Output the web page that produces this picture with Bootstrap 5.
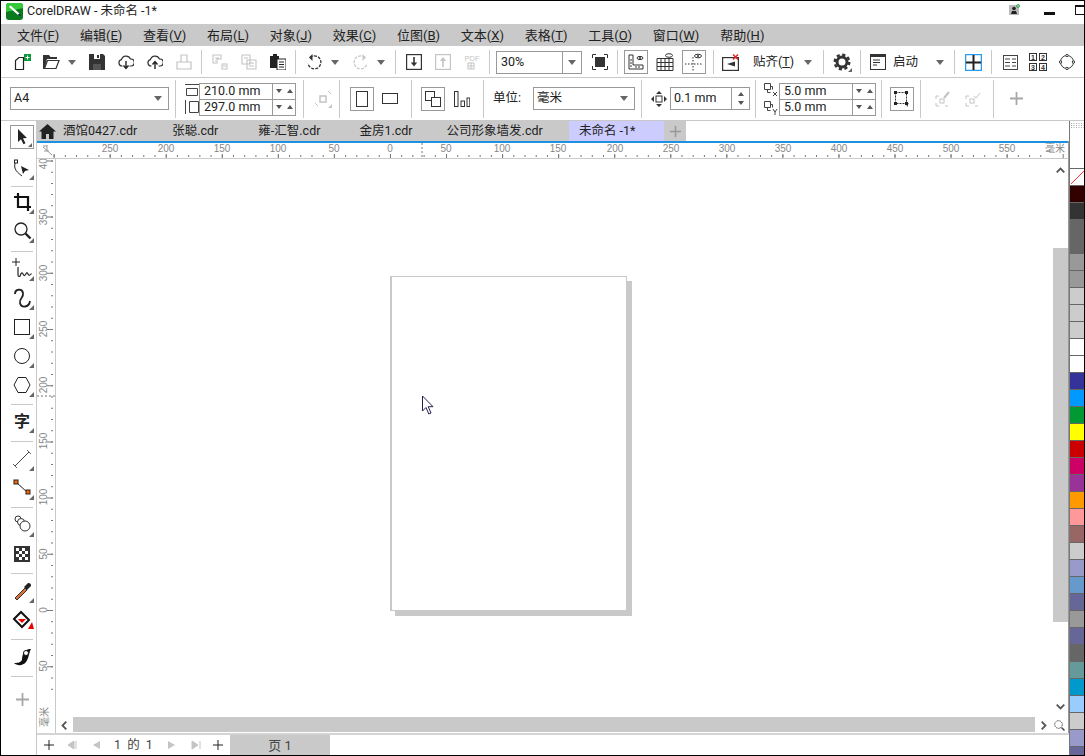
<!DOCTYPE html>
<html lang="zh">
<head>
<meta charset="utf-8">
<title>CorelDRAW</title>
<link href="https://cdn.jsdelivr.net/npm/bootstrap@5.3.0/dist/css/bootstrap.min.css" rel="stylesheet">
<style>
html,body{margin:0;height:756px;overflow:hidden;background:#fff}
body{font-family:Roboto,"Noto Sans CJK SC",sans-serif;font-size:12.5px;line-height:1;color:#222}
svg{display:block;flex:none}
.cw-win{width:1085px;height:756px;border:1px solid #000;overflow:hidden}
.cw-title{height:23px;flex:none;font-size:12.5px}
.cw-logo{margin:2px 4px 0 5px}
.cw-usr{margin:3px 24px 0 0}
.cw-winbtn-min{width:11px;height:3px;background:#111;margin:11px 20px 0 0}
.cw-winbtn-max{width:20px;height:10px;border:1px solid #111;border-top-width:2px;margin:4px -11px 0 0}
.cw-menu{height:22px;flex:none;background:#c9c9c9;padding-left:16px;font-size:13px}
.cw-menu span{margin-right:20.75px;white-space:nowrap}
.cw-tb1{height:32px;flex:none;padding-left:7px;padding-top:1px;border-bottom:1px solid #c9c9c9}
.cw-tb2{height:43px;flex:none;padding-left:9px;padding-bottom:1px;border-bottom:1px solid #c9c9c9}
.cw-t{width:29px;height:24px;flex:none}
.cw-tri{width:0;height:0;border-top:5px solid #666;border-left:4.5px solid transparent;border-right:4.5px solid transparent;flex:none}
.cw-tri-s{width:0;height:0;border-top:4px solid #555;border-left:3.5px solid transparent;border-right:3.5px solid transparent;flex:none}
.cw-tru-s{width:0;height:0;border-bottom:4px solid #555;border-left:3.5px solid transparent;border-right:3.5px solid transparent;flex:none}
.cw-arw{width:16px;padding-left:2px;flex:none}
.cw-sep{width:7px;height:24px;flex:none}
.cw-sep::after{content:"";display:block;width:1px;height:100%;background:#c9c9c9;margin-left:3px}
.cw-sep2{width:1px;height:38px;background:#c9c9c9;flex:none}
.cw-box{border:1px solid #999;background:#fff;flex:none}
.cw-ml1{margin-left:1px}.cw-ml2{margin-left:2px}.cw-ml3{margin-left:3px}.cw-ml4{margin-left:4px}.cw-ml5{margin-left:5px}.cw-ml6{margin-left:6px}.cw-ml7{margin-left:7px}.cw-ml8{margin-left:8px}.cw-ml9{margin-left:9px}.cw-ml10{margin-left:10px}.cw-ml11{margin-left:11px}.cw-ml12{margin-left:12px}.cw-ml13{margin-left:13px}.cw-ml14{margin-left:14px}.cw-ml15{margin-left:15px}.cw-ml16{margin-left:16px}.cw-ml18{margin-left:18px}
.cw-combo1{width:86px;height:23px;padding-left:4px}
.cw-combo1 i{display:block;width:1px;height:100%;background:#999;margin-left:auto}
.cw-combo1 b{display:flex;width:18px;justify-content:center}
.cw-a4{width:159px;height:23px;padding:0 6px 0 3px}
.cw-unit{width:102px;height:23px;padding:0 6px 0 3px}
.cw-fld{width:97px;height:33px;margin-top:1px}
.cw-fld>div{height:16px;flex:1}
.cw-fld>div+div{border-top:1px solid #999}
.cw-fld span.cw-val{width:73px;padding-left:4px;border-right:1px solid #999;height:100%;display:flex;align-items:center;flex:none}
.cw-fld .cw-sp{width:12px;justify-content:center;display:flex}
.cw-nud{width:80px;height:23px}
.cw-nud .cw-val{width:62px;padding-left:3px}
.cw-nud .cw-spin{width:18px;border-left:1px solid #999;height:100%;flex:none;gap:5px}
.cw-bx24{width:24px;height:24px}
.cw-body{flex:1;min-height:0}
.cw-tools{width:36px;flex:none;border-right:1px solid #c9c9c9;padding:2px 0 0 7px}
.cw-tool{width:28px;height:29px;flex:none}
.cw-pick{width:24px;height:24px;margin-top:2px;margin-bottom:5px}
.cw-gap6{margin-top:6px}
.cw-ts{width:22px;flex:none}
.cw-ts::after{content:"";display:block;height:1px;background:#c9c9c9;position:relative;top:50%}
.cw-ts5{height:5px}.cw-ts7{height:7px}.cw-ts8{height:8px}.cw-ts9{height:9px}
.cw-work{flex:1;min-width:0}
.cw-tabs{height:20px;flex:none}
.cw-tabbar{width:532px;height:100%;background:#c9c9c9;flex:none;padding-left:2px}
.cw-tab{white-space:nowrap;padding-top:1px}
.cw-t1{margin-left:7px}.cw-t2{margin-left:35px}.cw-t3{margin-left:40px}.cw-t4{margin-left:39px}.cw-t5{margin-left:34px}
.cw-tab-on{width:95px;height:100%;background:#ccf;padding-left:10px;flex:none}
.cw-tab-add{width:22px;height:100%;background:#c9c9c9;flex:none}
.cw-blue{height:2px;background:#1e90e0;flex:none;border-right:1px solid #999}
.cw-rh{height:16px;flex:none;border-bottom:1px solid #c9c9c9;border-right:1px solid #999}
.cw-rh svg{overflow:visible}
.cw-mid{flex:1;min-height:0}
.cw-rv{width:19px;flex:none;border-right:1px solid #c9c9c9;overflow:hidden}
.cw-col{flex:1;min-width:0}
.cw-canrow{flex:1;min-height:0}
.cw-canvas{flex:1;position:relative;background:#fff;overflow:hidden}
.cw-page{position:absolute;left:334px;top:117px;width:237px;height:335px;background:#fff;border:1px solid #c9c9c9;border-left-width:2px;box-shadow:5px 5px 0 #c9c9c9}
.cw-cursor{position:absolute;left:365px;top:236px}
.cw-vs{width:16px;flex:none;border-right:1px solid #999}
.cw-vs-thumb{width:15px;height:374px;background:#c9c9c9;margin-top:75px}
.cw-up{margin:8px 0 0 3px}
.cw-dn{margin:auto 0 7px 3px}
.cw-hs{height:16px;flex:none;padding-left:5px;border-right:1px solid #999}
.cw-hs-thumb{width:962px;height:15px;background:#c9c9c9;margin:0 0 1px 6px}
.cw-pb{height:22px;flex:none;border-top:2px solid #d4d4d4;padding-left:7px;color:#444}
.cw-pg{width:40px;word-spacing:3px;white-space:nowrap}
.cw-pb-tab{width:100px;height:100%;background:#c9c9c9;margin-left:7px;font-size:13px}
.cw-pal{width:15px;flex:none;border-left:1px solid #777;overflow:hidden}
.cw-grip{height:47px;flex:none;padding-top:2px}
.cw-sw{height:17px;flex:none;border-top:1px solid #666}
.cw-p-none{background:#fff}
.p1{background:#300}.p2{background:#333}.p3{background:#666}.p4{background:#999}.p5{background:#ccc}.p6{background:#fff}.p7{background:#339}.p8{background:#09f}.p9{background:#093}.p10{background:#ff0}.p11{background:#c00}.p12{background:#c06}.p13{background:#939}.p14{background:#f90}.p15{background:#f99}.p16{background:#966}.p17{background:#99c}.p18{background:#69c}.p19{background:#669}.p20{background:#699}.p21{background:#09c}.p22{background:#9cf}
.cw-ru{font-family:"Liberation Sans",sans-serif;font-size:10px;fill:#888}
.cw-ruc{font-family:"Noto Sans CJK SC",sans-serif;font-size:10px;fill:#888}
</style>
</head>
<body>
<svg width="0" height="0" class="position-absolute">
  <defs>
    <path id="crn" d="M26 21v5h-5z" fill="#666"/>
    <g id="cloudpath"><path d="M4.500 12H4a3.200 3.200 0 0 1-.6-6.300A4.800 4.800 0 0 1 12.500 5 3.500 3.500 0 0 1 13 12h-1.500" fill="none" stroke="#333" stroke-width="1.200"/></g>
  </defs>
</svg>
<div class="cw-win d-flex flex-column">

  <div class="cw-title d-flex align-items-start">
    <svg class="cw-logo" width="17" height="17" viewBox="0 0 17 17"><rect width="17" height="17" rx="3" fill="#0a7a1e"/><path d="M0 9V3a3 3 0 0 1 3-3h11a3 3 0 0 1 3 3v2z" fill="#38c83c"/><path d="M3 4l9 8 1.500-1.500-9-8z" fill="#fff"/><path d="M12 12l3 1-1.500-2.500z" fill="#123"/></svg>
    <span class="mt-1">CorelDRAW - 未命名 -1*</span>
    <div class="ms-auto d-flex align-items-start">
      <svg class="cw-usr" width="11" height="12" viewBox="0 0 11 12"><rect y="1" width="10" height="10" fill="#bbb"/><circle cx="5" cy="4.500" r="1.800" fill="#222"/><path d="M2 10l1-3h4l1 3z" fill="#222"/><circle cx="9" cy="2" r="1.500" fill="none" stroke="#3a5"/></svg>
      <div class="cw-winbtn-min"></div>
      <div class="cw-winbtn-max"></div>
    </div>
  </div>

  <div class="cw-menu d-flex align-items-center">
    <span>文件(<u>F</u>)</span><span>编辑(<u>E</u>)</span><span>查看(<u>V</u>)</span><span>布局(<u>L</u>)</span><span>对象(<u>J</u>)</span><span>效果(<u>C</u>)</span><span>位图(<u>B</u>)</span><span>文本(<u>X</u>)</span><span>表格(<u>T</u>)</span><span>工具(<u>O</u>)</span><span>窗口(<u>W</u>)</span><span>帮助(<u>H</u>)</span>
  </div>

  <div class="cw-tb1 d-flex align-items-center">
    <div class="cw-t d-flex align-items-center justify-content-center"><svg width="18" height="18" viewBox="0 0 18 18"><path d="M1.500 16.500V7.500l3.500-3h4.500v12z" fill="none" stroke="#222" stroke-width="1.200"/><rect x="10" y="1" width="7" height="7" fill="#0a9a3c"/><path d="M13.500 2.500v4M11.500 4.500h4" stroke="#fff"/></svg></div>
    <div class="cw-t d-flex align-items-center justify-content-center"><svg width="17" height="16" viewBox="0 0 17 16"><path d="M0 15V1h6l1.500 2H14v2H4L1.500 15z" fill="#333"/><path d="M4.500 6.500H16l-3 8H1.500z" fill="#fff" stroke="#333" stroke-width="1.200"/></svg></div>
    <div class="cw-arw"><div class="cw-tri"></div></div>
    <div class="cw-t d-flex align-items-center justify-content-center"><svg width="16" height="16" viewBox="0 0 16 16"><path d="M0 0h14l2 2v14H0z" fill="#333"/><rect x="5" y="0" width="6" height="5" fill="#fff"/><rect x="8" y="1" width="2" height="3" fill="#333"/><rect x="4" y="10" width="8" height="6" fill="#555"/></svg></div>
    <div class="cw-t d-flex align-items-center justify-content-center"><svg width="16" height="16" viewBox="0 0 16 16"><use href="#cloudpath"/><path d="M8 7v7M5.500 11.500L8 14.500l2.500-3" fill="none" stroke="#222" stroke-width="1.400"/></svg></div>
    <div class="cw-t d-flex align-items-center justify-content-center"><svg width="16" height="16" viewBox="0 0 16 16"><use href="#cloudpath"/><path d="M8 15V8M5.500 10.500L8 7.500l2.500 3" fill="none" stroke="#222" stroke-width="1.400"/></svg></div>
    <div class="cw-t d-flex align-items-center justify-content-center"><svg width="16" height="16" viewBox="0 0 16 16" fill="none" stroke="#c4c4c4" stroke-width="1.200"><path d="M5 8V1h6v7M1 15V8h14v7z"/></svg></div>
    <div class="cw-sep"></div>
    <div class="cw-t d-flex align-items-center justify-content-center"><svg width="16" height="16" viewBox="0 0 16 16" fill="none" stroke="#c4c4c4" stroke-width="1.100"><path d="M1 1h8v4H5v4H1zM3 4h4M3 7h1M10 10h5v5h-5zM11 12h3"/></svg></div>
    <div class="cw-t d-flex align-items-center justify-content-center"><svg width="16" height="16" viewBox="0 0 16 16" fill="none" stroke="#c4c4c4" stroke-width="1.100"><path d="M1 1h8v9H1zM6 6h9v9H6zM3 4h4M8 9h5M8 12h5"/></svg></div>
    <div class="cw-t d-flex align-items-center justify-content-center"><svg width="16" height="16" viewBox="0 0 16 16"><path d="M0 2h3V0h4v2h2v12H0z" fill="#222"/><rect x="7" y="5" width="9" height="11" fill="#fff" stroke="#222"/><path d="M9 8h5M9 10.500h5M9 13h5" stroke="#222"/></svg></div>
    <div class="cw-sep"></div>
    <div class="cw-t d-flex align-items-center justify-content-center"><svg width="16" height="16" viewBox="0 0 16 16" fill="none" stroke="#333" stroke-width="1.300"><path d="M4 3.500a6.500 6.500 0 1 1-2 6" stroke-dasharray="3 1.200"/><path d="M6.500 0L3 3.500 6.500 7" fill="#333" stroke="none"/></svg></div>
    <div class="cw-arw cw-ml1"><div class="cw-tri"></div></div>
    <div class="cw-t cw-ml1 d-flex align-items-center justify-content-center"><svg width="16" height="16" viewBox="0 0 16 16" fill="none" stroke="#c8c8c8" stroke-width="1.300"><path d="M12 3.500a6.500 6.500 0 1 0 2 6" stroke-dasharray="3 1.200"/><path d="M9.500 0L13 3.500 9.500 7" fill="#c8c8c8" stroke="none"/></svg></div>
    <div class="cw-arw"><div class="cw-tri"></div></div>
    <div class="cw-sep cw-ml1"></div>
    <div class="cw-t d-flex align-items-center justify-content-center"><svg width="16" height="16" viewBox="0 0 16 16" fill="none" stroke="#333" stroke-width="1.200"><rect x=".6" y=".6" width="14.800" height="14.800"/><path d="M8 3v8" stroke-width="1.600"/><path d="M4.800 8.500H11.200L8 12.500z" fill="#333" stroke="none"/></svg></div>
    <div class="cw-t d-flex align-items-center justify-content-center"><svg width="16" height="16" viewBox="0 0 16 16" fill="none" stroke="#c4c4c4" stroke-width="1.200"><rect x=".6" y=".6" width="14.800" height="14.800"/><path d="M8 13V5" stroke-width="1.600"/><path d="M4.800 7H11.200L8 3z" fill="#c4c4c4" stroke="none"/></svg></div>
    <div class="cw-t d-flex align-items-center justify-content-center"><svg width="18" height="18" viewBox="0 0 18 18"><text x="9" y="7.500" text-anchor="middle" font-family="Liberation Sans" font-size="7.500" fill="#c4c4c4">PDF</text><rect x="5" y="10" width="6" height="6" fill="none" stroke="#c4c4c4"/><path d="M8 10v6M5 13h6" stroke="#c4c4c4"/></svg></div>
    <div class="cw-sep"></div>
    <div class="cw-box cw-combo1 cw-ml3 d-flex align-items-center"><span>30%</span><i></i><b><span class="cw-tri"></span></b></div>
    <div class="cw-t cw-ml3 d-flex align-items-center justify-content-center"><svg width="16" height="16" viewBox="0 0 16 16"><rect x="3" y="3" width="10" height="10" fill="#333"/><path d="M.5 4V.5H4M12 .5h3.500V4M.5 12v3.500H4M12 15.500h3.500V12" fill="none" stroke="#333"/></svg></div>
    <div class="cw-sep"></div>
    <div class="cw-box cw-ml3 d-flex align-items-center justify-content-center cw-bx24"><svg width="16" height="16" viewBox="0 0 16 16" fill="none" stroke="#333"><path d="M1 1v14h14v-4H5V1z"/><path d="M2 6h2M2 9h2M2 12h2M8 12v2M11 12v2"/><ellipse cx="12" cy="4" rx="3" ry="1.600"/><circle cx="12" cy="4" r=".6" fill="#333"/></svg></div>
    <div class="cw-ml8 d-flex align-items-center justify-content-center"><svg width="18" height="18" viewBox="0 0 18 18" fill="none" stroke="#333"><path d="M1 5.500h16v12H1zM1 9.500h16M1 13.500h16M5 5.500v12M9 5.500v12M13 5.500v12"/><ellipse cx="13" cy="2.500" rx="3.500" ry="1.800"/></svg></div>
    <div class="cw-box cw-ml8 d-flex align-items-center justify-content-center cw-bx24"><svg width="18" height="18" viewBox="0 0 18 18" fill="none" stroke="#333"><path d="M0 11h18M8 4v14" stroke-dasharray="1.500 1.500"/><ellipse cx="13" cy="3" rx="3.500" ry="1.800"/><circle cx="13" cy="3" r=".6" fill="#333"/></svg></div>
    <div class="cw-sep cw-ml4"></div>
    <div class="cw-ml5 d-flex align-items-center justify-content-center"><svg width="17" height="17" viewBox="0 0 17 17" fill="none" stroke="#333" stroke-width="1.200"><rect x=".6" y="3.600" width="15.800" height="12.800"/><path d="M13 7.500L5 10l8 2.500z" fill="#333" stroke="none"/><path d="M11 .5l5 5M16 .5l-5 5" stroke="#e02020" stroke-width="1.400"/></svg></div>
    <span class="cw-ml14 text-nowrap">贴齐(<u>T</u>)</span>
    <div class="cw-tri cw-ml10"></div>
    <div class="cw-sep cw-ml8"></div>
    <div class="cw-ml6 d-flex"><svg width="19" height="19" viewBox="0 0 19 19"><circle cx="9" cy="9" r="5" fill="none" stroke="#333" stroke-width="3"/><circle cx="9" cy="9" r="7.300" fill="none" stroke="#333" stroke-width="2.400" stroke-dasharray="3.200 2.530"/><path d="M19 15v4h-4z" fill="#666"/></svg></div>
    <div class="cw-sep cw-ml5"></div>
    <div class="cw-ml6 d-flex"><svg width="16" height="16" viewBox="0 0 16 16" fill="none" stroke="#333"><rect x=".5" y=".5" width="15" height="15"/><path d="M0 2h16" stroke-width="2"/><path d="M3 6h7M3 8.500h7M3 11h4"/></svg></div>
    <span class="cw-ml7 text-nowrap">启动</span>
    <div class="cw-tri cw-ml18"></div>
    <div class="cw-sep cw-ml7"></div>
    <div class="cw-ml7 d-flex"><svg width="17" height="17" viewBox="0 0 17 17"><rect x=".5" y=".5" width="16" height="16" fill="none" stroke="#2a9cf0" stroke-width="1.500"/><path d="M8.500 1v15M1 8.500h15" stroke="#222" stroke-width="2"/></svg></div>
    <div class="cw-sep cw-ml6"></div>
    <div class="cw-ml8 d-flex"><svg width="15" height="15" viewBox="0 0 15 15" fill="none" stroke="#444"><rect x=".5" y=".5" width="14" height="14"/><path d="M2 4h5M9 4h4M2 7.500h5M9 7.500h4M2 11h5M9 11h4"/></svg></div>
    <div class="cw-ml11 d-flex"><svg width="18" height="18" viewBox="0 0 18 18"><g fill="none" stroke="#333"><rect x=".5" y=".5" width="7" height="7"/><rect x="10.500" y=".5" width="7" height="7"/><rect x=".5" y="10.500" width="7" height="7"/><rect x="10.500" y="10.500" width="7" height="7"/></g><g font-family="Liberation Sans" font-size="7" font-weight="700" fill="#333" text-anchor="middle"><text x="4" y="6.500">1</text><text x="14" y="6.500">2</text><text x="4" y="16.500">3</text><text x="14" y="16.500">4</text></g></svg></div>
    <div class="cw-ml12 d-flex"><svg width="16" height="16" viewBox="0 0 16 16"><circle cx="8" cy="8" r="6.500" fill="none" stroke="#333"/><g fill="#fff" stroke="#333"><circle cx="8" cy="1.500" r="1.200"/><circle cx="8" cy="14.500" r="1.200"/><circle cx="1.500" cy="8" r="1.200"/><circle cx="14.500" cy="8" r="1.200"/></g></svg></div>
  </div>

  <div class="cw-tb2 d-flex align-items-center">
    <div class="cw-box cw-a4 d-flex align-items-center justify-content-between"><span>A4</span><span class="cw-tri"></span></div>
    <div class="cw-sep2 cw-ml6"></div>
    <div class="cw-ml9 d-flex flex-column gap-1"><svg width="14" height="12" viewBox="0 0 14 12" fill="none" stroke="#444"><path d="M0 .5h14M1.500 4.500h11v7h-11z"/></svg><svg width="14" height="14" viewBox="0 0 14 14" fill="none" stroke="#444"><path d="M.5 0v14M4.500 1.500h9v11h-9z"/></svg></div>
    <div class="cw-box cw-fld d-flex flex-column">
      <div class="d-flex align-items-center"><span class="cw-val">210.0 mm</span><span class="cw-sp"><span class="cw-tri-s"></span></span><span class="cw-sp"><span class="cw-tru-s"></span></span></div>
      <div class="d-flex align-items-center"><span class="cw-val">297.0 mm</span><span class="cw-sp"><span class="cw-tri-s"></span></span><span class="cw-sp"><span class="cw-tru-s"></span></span></div>
    </div>
    <div class="cw-sep2 cw-ml7"></div>
    <div class="cw-ml10 d-flex"><svg width="18" height="18" viewBox="0 0 18 18" fill="none" stroke="#c4c4c4"><rect x="6" y="6" width="6" height="6" stroke-width="1.500"/><path d="M1 13l3 3M14 1l3 3"/><path d="M18 14v4h-4z" fill="#c4c4c4" stroke="none"/></svg></div>
    <div class="cw-sep2 cw-ml7"></div>
    <div class="cw-box cw-bx24 cw-ml10 d-flex align-items-center justify-content-center"><svg width="12" height="16" viewBox="0 0 12 16"><rect x=".5" y=".5" width="11" height="15" fill="none" stroke="#333"/></svg></div>
    <div class="cw-ml8 d-flex"><svg width="16" height="11" viewBox="0 0 16 11"><rect x=".5" y=".5" width="15" height="10" fill="none" stroke="#333"/></svg></div>
    <div class="cw-sep2 cw-ml13"></div>
    <div class="cw-box cw-bx24 cw-ml9 d-flex align-items-center justify-content-center"><svg width="16" height="16" viewBox="0 0 16 16" fill="none" stroke="#333"><rect x=".5" y=".5" width="9" height="9"/><rect x="6.500" y="6.500" width="9" height="9" fill="#fff"/></svg></div>
    <div class="cw-ml9 d-flex"><svg width="16" height="16" viewBox="0 0 16 16" fill="none" stroke="#333"><rect x=".5" y=".5" width="3.500" height="15"/><rect x="7" y="10" width="3.500" height="5.500"/><rect x="13" y="7" width="2.800" height="8.500"/></svg></div>
    <div class="cw-sep2 cw-ml13"></div>
    <span class="cw-ml9 text-nowrap">单位:</span>
    <div class="cw-box cw-unit cw-ml12 d-flex align-items-center justify-content-between"><span>毫米</span><span class="cw-tri"></span></div>
    <div class="cw-sep2 cw-ml6"></div>
    <div class="cw-ml9 d-flex"><svg width="16" height="16" viewBox="0 0 16 16"><path d="M8 0l3 3H5zM8 16l-3-3h6zM0 8l3-3v6zM16 8l-3 3V5z" fill="#333"/><rect x="5" y="5" width="6" height="6" fill="none" stroke="#333"/></svg></div>
    <div class="cw-box cw-nud cw-ml3 d-flex align-items-center"><span class="cw-val">0.1 mm</span><span class="cw-spin d-flex flex-column align-items-center justify-content-center"><span class="cw-tru-s"></span><span class="cw-tri-s"></span></span></div>
    <div class="cw-sep2 cw-ml5"></div>
    <div class="cw-ml8 d-flex flex-column gap-1"><svg width="14" height="14" viewBox="0 0 14 14" fill="none" stroke="#444"><path d="M.5.500h6v6h-6zM3.500 6.500v3h3M6.500 3.500h2v3"/><path d="M9 9l4 4M13 9l-4 4"/></svg><svg width="14" height="14" viewBox="0 0 14 14" fill="none" stroke="#444"><path d="M.5.500h6v6h-6zM3.500 6.500v3h3M6.500 3.500h2v3"/><path d="M9 8l2 3 2-3M11 11v3"/></svg></div>
    <div class="cw-box cw-fld cw-ml1 d-flex flex-column">
      <div class="d-flex align-items-center"><span class="cw-val">5.0 mm</span><span class="cw-sp"><span class="cw-tri-s"></span></span><span class="cw-sp"><span class="cw-tru-s"></span></span></div>
      <div class="d-flex align-items-center"><span class="cw-val">5.0 mm</span><span class="cw-sp"><span class="cw-tri-s"></span></span><span class="cw-sp"><span class="cw-tru-s"></span></span></div>
    </div>
    <div class="cw-sep2 cw-ml5"></div>
    <div class="cw-box cw-bx24 cw-ml8 d-flex align-items-center justify-content-center"><svg width="16" height="16" viewBox="0 0 16 16"><path d="M1.500 1.500h11v11h-11z" fill="none" stroke="#333" stroke-dasharray="2 1"/><g fill="#222"><rect width="3" height="3"/><rect x="11" width="3" height="3"/><rect y="11" width="3" height="3"/><rect x="11" y="11" width="3" height="3"/></g><path d="M12 10l3 3-1.500.3.500 2-1 .3-.5-2-1 1z" fill="#222"/></svg></div>
    <div class="cw-sep2 cw-ml6"></div>
    <div class="cw-ml14 d-flex"><svg width="16" height="16" viewBox="0 0 16 16" fill="none" stroke="#c4c4c4"><rect x="5" y="8" width="4" height="4"/><path d="M1 5h3M10 5h1M1 5v3M1 12v3h3M10 15h3"/><path d="M9 7l5-6" stroke-width="2"/></svg></div>
    <div class="cw-ml14 d-flex"><svg width="16" height="16" viewBox="0 0 16 16" fill="none" stroke="#c4c4c4"><rect x="5" y="8" width="4" height="4"/><path d="M1 5h3M1 5v3M1 12v3h3M10 15h3"/><path d="M9 5l2 2 4-5"/></svg></div>
    <div class="cw-sep2 cw-ml12"></div>
    <div class="cw-ml16 d-flex"><svg width="13" height="13" viewBox="0 0 13 13"><path d="M6.500 0v13M0 6.500h13" stroke="#a8a8a8" stroke-width="1.800"/></svg></div>
  </div>

  <div class="cw-body d-flex">
    <div class="cw-tools d-flex flex-column align-items-center">
      <div class="cw-box cw-pick d-flex align-items-center justify-content-center"><svg width="22" height="22" viewBox="0 0 22 22"><path d="M7 3l9 9-4 .3 2.500 5-2 1-2.500-5L7 16z" fill="#222"/><path d="M21 17v4h-4z" fill="#666"/></svg></div>
      <div class="cw-tool"><svg width="28" height="28" viewBox="0 0 28 28"><path d="M8 7c-3 6-1 10 6 15" fill="none" stroke="#222"/><rect x="6.500" y="6" width="3" height="3" fill="#fff" stroke="#222"/><path d="M13 12l8 4-4 1-2 3z" fill="#222"/><use href="#crn"/></svg></div>
      <div class="cw-ts cw-ts5"></div>
      <div class="cw-tool"><svg width="28" height="28" viewBox="0 0 28 28"><path d="M10 5v14h13M6 9h14v14" fill="none" stroke="#111" stroke-width="2.200"/><use href="#crn"/></svg></div>
      <div class="cw-tool"><svg width="28" height="28" viewBox="0 0 28 28"><circle cx="13" cy="12" r="6" fill="none" stroke="#222" stroke-width="1.300"/><path d="M17.500 16.500l5 5" stroke="#222" stroke-width="2.400"/><use href="#crn"/></svg></div>
      <div class="cw-ts cw-ts9"></div>
      <div class="cw-tool"><svg width="28" height="28" viewBox="0 0 28 28"><path d="M8 3v8M4 7h8" stroke="#222"/><path d="M10 12v8c0 2 2 2 2.500 0s1.500-3 2.500-1 1.500 2 2.500.5 1.500-2.500 2.500-.5 2 1.500 3.500-.5" fill="none" stroke="#222" stroke-width="1.200"/><use href="#crn"/></svg></div>
      <div class="cw-tool"><svg width="28" height="28" viewBox="0 0 28 28"><path d="M7 10c0-5 7-6 8-1s-4 5-3 10 9 5 10-2" fill="none" stroke="#222" stroke-width="1.800"/><use href="#crn"/></svg></div>
      <div class="cw-tool"><svg width="28" height="28" viewBox="0 0 28 28"><rect x="6.500" y="6.500" width="15" height="15" fill="none" stroke="#222"/><use href="#crn"/></svg></div>
      <div class="cw-tool"><svg width="28" height="28" viewBox="0 0 28 28"><circle cx="14" cy="14" r="7.500" fill="none" stroke="#222"/><use href="#crn"/></svg></div>
      <div class="cw-tool"><svg width="28" height="28" viewBox="0 0 28 28"><path d="M10 6.500h8l4 7.500-4 7.500h-8L6 14z" fill="none" stroke="#222"/><use href="#crn"/></svg></div>
      <div class="cw-ts cw-ts7"></div>
      <div class="cw-tool position-relative d-flex align-items-center justify-content-center"><span class="fs-6 fw-bold">字</span><svg class="position-absolute top-0 start-0" width="28" height="28" viewBox="0 0 28 28"><use href="#crn"/></svg></div>
      <div class="cw-ts cw-ts9"></div>
      <div class="cw-tool"><svg width="28" height="28" viewBox="0 0 28 28"><path d="M7 21L21 7" stroke="#444"/><path d="M5 19l4 4M19 5l4 4" stroke="#666"/><use href="#crn"/></svg></div>
      <div class="cw-tool"><svg width="28" height="28" viewBox="0 0 28 28"><path d="M8 8l12 11" stroke="#222"/><rect x="6" y="6" width="4" height="4" fill="#f60" stroke="#222"/><rect x="18" y="16" width="4" height="4" fill="#f60" stroke="#222"/><use href="#crn"/></svg></div>
      <div class="cw-ts cw-ts8"></div>
      <div class="cw-tool"><svg width="28" height="28" viewBox="0 0 28 28"><g fill="#fff" stroke="#333"><circle cx="10" cy="8" r="3"/><circle cx="13" cy="11" r="3.500"/><circle cx="17" cy="15" r="5"/></g><use href="#crn"/></svg></div>
      <div class="cw-tool"><svg width="28" height="28" viewBox="0 0 28 28"><rect x="6" y="6" width="16" height="16" fill="#333"/><g fill="#fff"><rect x="8" y="8" width="3" height="3"/><rect x="14" y="8" width="3" height="3"/><rect x="11" y="11" width="3" height="3"/><rect x="17" y="11" width="3" height="3"/><rect x="8" y="14" width="3" height="3"/><rect x="14" y="14" width="3" height="3"/><rect x="11" y="17" width="3" height="3"/><rect x="17" y="17" width="3" height="3"/></g></svg></div>
      <div class="cw-ts cw-ts8"></div>
      <div class="cw-tool"><svg width="28" height="28" viewBox="0 0 28 28"><path d="M7 21l10-10 2 2L9 23z" fill="#d8703a" stroke="#333"/><path d="M16 10l4-4a2.500 2.500 0 0 1 3 3l-4 4z" fill="#222"/><use href="#crn"/></svg></div>
      <div class="cw-tool"><svg width="28" height="28" viewBox="0 0 28 28"><path d="M6 13l7-7 8 8-7 7z" fill="#fff" stroke="#111" stroke-width="2"/><path d="M10 13h8l-4 4z" fill="#e00"/><path d="M24 16l2 7h-6z" fill="#e00"/></svg></div>
      <div class="cw-ts cw-ts8"></div>
      <div class="cw-tool"><svg width="28" height="28" viewBox="0 0 28 28"><path d="M6 20c3 3 9 3 12-1s3-10 5-13c-4 0-7 2-8 5s-1 5-1 6c-2 3-5 3-8 3z" fill="#111"/><circle cx="18" cy="10" r="2.500" fill="#fff" stroke="#111"/></svg></div>
      <div class="cw-ts cw-ts7"></div>
      <div class="cw-tool cw-gap6 d-flex align-items-center justify-content-center"><svg width="13" height="13" viewBox="0 0 13 13"><path d="M6.500 0v13M0 6.500h13" stroke="#a8a8a8" stroke-width="1.800"/></svg></div>
    </div>

    <div class="cw-work d-flex flex-column">
      <div class="cw-tabs d-flex align-items-center">
        <div class="cw-tabbar d-flex align-items-center">
          <svg width="17" height="16" viewBox="0 0 17 16"><path d="M8.500 1L0 8.500h2.500V16h4.500v-5h3v5h4.500V8.500H17z" fill="#222"/></svg>
          <span class="cw-tab cw-t1">酒馆0427.cdr</span><span class="cw-tab cw-t2">张聪.cdr</span><span class="cw-tab cw-t3">雍-汇智.cdr</span><span class="cw-tab cw-t4">金房1.cdr</span><span class="cw-tab cw-t5">公司形象墙发.cdr</span>
        </div>
        <div class="cw-tab-on d-flex align-items-center">未命名 -1*</div>
        <div class="cw-tab-add d-flex align-items-center justify-content-center"><svg width="11" height="11" viewBox="0 0 11 11"><path d="M5.500 0v11M0 5.500h11" stroke="#999" stroke-width="1.600"/></svg></div>
      </div>
      <div class="cw-blue"></div>
      <div class="cw-rh">
        <svg width="1031" height="15" viewBox="0 0 1031 15">
          <path d="M6 4l9 8M7 8h5M10 2v6M6 3h4" stroke="#999" fill="none"/>
          <path d="M16.600 13H1014" stroke="#777" stroke-width="2" stroke-dasharray="1 10.212" fill="none"/>
          <path d="M16.600 13H1031" stroke="#777" stroke-width="4" stroke-dasharray="1 55.060" fill="none"/>
          <path d="M385 0v15" stroke="#777" stroke-dasharray="2 2"/>
          <g class="cw-ru" text-anchor="middle">
            <text x="73" y="8.500">250</text><text x="129" y="8.500">200</text><text x="185" y="8.500">150</text><text x="241" y="8.500">100</text><text x="297" y="8.500">50</text><text x="353" y="8.500">0</text><text x="409" y="8.500">50</text><text x="465" y="8.500">100</text><text x="521" y="8.500">150</text><text x="578" y="8.500">200</text><text x="634" y="8.500">250</text><text x="690" y="8.500">300</text><text x="746" y="8.500">350</text><text x="802" y="8.500">400</text><text x="858" y="8.500">450</text><text x="914" y="8.500">500</text><text x="970" y="8.500">550</text>
          </g>
          <text class="cw-ruc" x="1018" y="9" text-anchor="middle">毫米</text>
        </svg>
      </div>
      <div class="cw-mid d-flex">
        <div class="cw-rv">
          <svg width="18" height="574" viewBox="0 0 18 574">
            <path d="M15 1.400V540" stroke="#777" stroke-width="2" stroke-dasharray="1 10.240" fill="none"/>
            <path d="M13 1.400V540" stroke="#777" stroke-width="6" stroke-dasharray="1 55.200" fill="none"/>
            <path d="M0 237H18" stroke="#777" stroke-dasharray="2 2"/>
            <g class="cw-ru" text-anchor="middle">
              <text transform="translate(10 2) rotate(-90)">400</text><text transform="translate(10 58) rotate(-90)">350</text><text transform="translate(10 114) rotate(-90)">300</text><text transform="translate(10 170) rotate(-90)">250</text><text transform="translate(10 226) rotate(-90)">200</text><text transform="translate(10 282) rotate(-90)">150</text><text transform="translate(10 338) rotate(-90)">100</text><text transform="translate(10 395) rotate(-90)">50</text><text transform="translate(10 451) rotate(-90)">0</text><text transform="translate(10 507) rotate(-90)">50</text>
            </g>
            <text class="cw-ruc" transform="translate(11 558) rotate(-90)" text-anchor="middle">毫米</text>
          </svg>
        </div>
        <div class="cw-col d-flex flex-column">
          <div class="cw-canrow d-flex">
            <div class="cw-canvas">
              <div class="cw-page"></div>
              <svg class="cw-cursor" width="14" height="21" viewBox="0 0 14 21"><path d="M1.500 1v15l3.500-3.500 2.800 6.500 2.200-1-2.800-6.300H12z" fill="#fff" stroke="#222050"/></svg>
            </div>
            <div class="cw-vs d-flex flex-column">
              <svg class="cw-up" width="9" height="6" viewBox="0 0 9 6"><path d="M.7 5.300L4.500 1.500l3.800 3.800" fill="none" stroke="#555" stroke-width="1.800"/></svg>
              <div class="cw-vs-thumb"></div>
              <svg class="cw-dn" width="9" height="6" viewBox="0 0 9 6"><path d="M.7.700l3.800 3.800L8.300.7" fill="none" stroke="#555" stroke-width="1.800"/></svg>
            </div>
          </div>
          <div class="cw-hs d-flex align-items-center">
            <svg width="6" height="9" viewBox="0 0 6 9"><path d="M5.300.7L1.500 4.500l3.800 3.800" fill="none" stroke="#555" stroke-width="1.800"/></svg>
            <div class="cw-hs-thumb"></div>
            <svg class="cw-ml6" width="6" height="9" viewBox="0 0 6 9"><path d="M.7.700l3.800 3.800L.7 8.300" fill="none" stroke="#555" stroke-width="1.800"/></svg>
            <svg class="cw-ml7" width="11" height="11" viewBox="0 0 11 11"><circle cx="4.500" cy="4.500" r="3.800" fill="#fff" stroke="#444" stroke-dasharray="1.500 .8"/><path d="M7.500 7.500l3 3" stroke="#444" stroke-width="1.500"/></svg>
          </div>
        </div>
      </div>
      <div class="cw-pb d-flex align-items-center">
        <svg width="10" height="10" viewBox="0 0 10 10"><path d="M5 0v10M0 5h10" stroke="#222"/></svg>
        <svg class="cw-ml13" width="10" height="10" viewBox="0 0 10 10"><path d="M3 1L9 5 3 9zM1 1v8" transform="matrix(-1 0 0 1 10 0)" fill="#c4c4c4" stroke="#c4c4c4"/></svg>
        <svg class="cw-ml15" width="8" height="10" viewBox="0 0 8 10"><path d="M8 1v8L1 5z" fill="#c4c4c4"/></svg>
        <span class="cw-ml14 cw-pg">1 的 1</span>
        <svg class="cw-ml14" width="8" height="10" viewBox="0 0 8 10"><path d="M0 1v8l7-4z" fill="#c4c4c4"/></svg>
        <svg class="cw-ml15" width="10" height="10" viewBox="0 0 10 10"><path d="M1 1l6 4-6 4zM9 1v8" fill="#c4c4c4" stroke="#c4c4c4"/></svg>
        <svg class="cw-ml12" width="10" height="10" viewBox="0 0 10 10"><path d="M5 0v10M0 5h10" stroke="#222"/></svg>
        <div class="cw-pb-tab d-flex align-items-center justify-content-center">页 1</div>
      </div>
    </div>

    <div class="cw-pal d-flex flex-column">
      <div class="cw-grip"><svg width="15" height="5" viewBox="0 0 15 5"><path d="M1 .5h13M1 2.500h13M1 4.500h13" stroke="#aaa" stroke-dasharray="1 1.500"/></svg></div>
      <div class="cw-sw cw-p-none"><svg width="14" height="16" viewBox="0 0 14 16"><path d="M1 15L14 2" stroke="#f33"/></svg></div>
      <div class="cw-sw p1"></div><div class="cw-sw p2"></div><div class="cw-sw p3"></div><div class="cw-sw p3"></div><div class="cw-sw p4"></div><div class="cw-sw p4"></div><div class="cw-sw p5"></div><div class="cw-sw p5"></div><div class="cw-sw p5"></div><div class="cw-sw p6"></div><div class="cw-sw p6"></div><div class="cw-sw p7"></div><div class="cw-sw p8"></div><div class="cw-sw p9"></div><div class="cw-sw p10"></div><div class="cw-sw p11"></div><div class="cw-sw p12"></div><div class="cw-sw p13"></div><div class="cw-sw p14"></div><div class="cw-sw p15"></div><div class="cw-sw p16"></div><div class="cw-sw p5"></div><div class="cw-sw p17"></div><div class="cw-sw p18"></div><div class="cw-sw p19"></div><div class="cw-sw p4"></div><div class="cw-sw p19"></div><div class="cw-sw p3"></div><div class="cw-sw p20"></div><div class="cw-sw p21"></div><div class="cw-sw p22"></div><div class="cw-sw p5"></div><div class="cw-sw p17"></div><div class="cw-sw p19"></div>
    </div>
  </div>
</div>
</body>
</html>
